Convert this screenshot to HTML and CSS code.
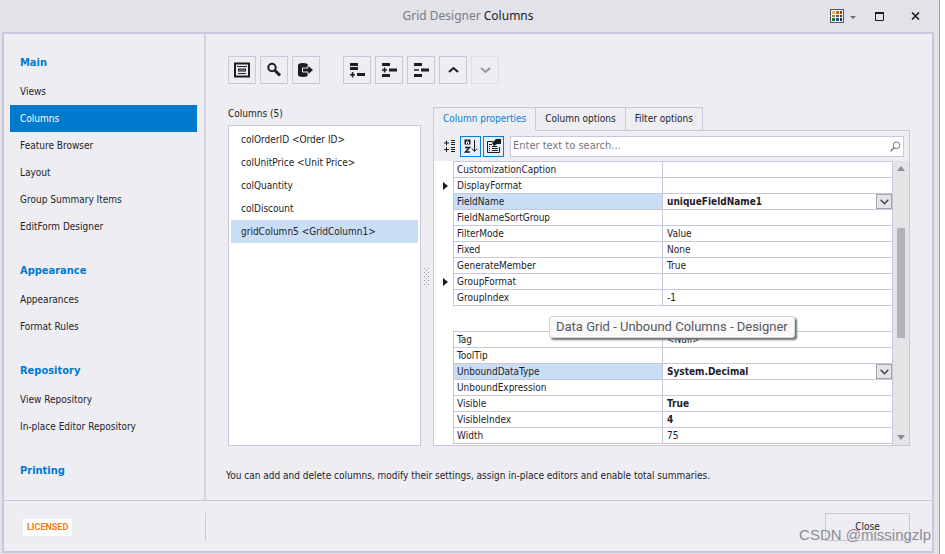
FILE: index.html
```html
<!DOCTYPE html>
<html lang="en">
<head>
<meta charset="utf-8">
<title>Grid Designer Columns</title>
<link rel="stylesheet" href="styles.css">
</head>
<body>
<div class="window">
  <header class="titlebar">
    <h1 class="title"><span class="title-app">Grid Designer</span> Columns</h1>
    <div class="window-buttons">
      <button class="skin-button" type="button" aria-label="Skin">
        <svg width="26" height="14" viewBox="0 0 26 14">
          <rect x=".5" y=".5" width="13" height="13" fill="#f4f4f6" stroke="#55555c"/>
          <rect x="2" y="2" width="3" height="3" fill="#eeb163"/><rect x="6" y="2" width="3" height="3" fill="#c4741c"/><rect x="10" y="2" width="2" height="3" fill="#8c4310"/>
          <rect x="2" y="6" width="3" height="2" fill="#9a8250"/><rect x="6" y="6" width="3" height="2" fill="#17734c"/><rect x="10" y="6" width="2" height="2" fill="#4b2a33"/>
          <rect x="2" y="9" width="3" height="3" fill="#1f7a35"/><rect x="6" y="9" width="3" height="3" fill="#1d55a0"/><rect x="10" y="9" width="2" height="3" fill="#1c2368"/>
          <path d="M20 7h6l-3 3z" fill="#6c6c72"/>
        </svg>
      </button>
      <button type="button" aria-label="Maximize">
        <svg width="9" height="9" viewBox="0 0 9 9"><path d="M.5 1v7.500h8V1" fill="none" stroke="#1b1b1f"/><path d="M0 0h9v2H0z" fill="#1b1b1f"/></svg>
      </button>
      <button type="button" aria-label="Close window">
        <svg width="9" height="8" viewBox="0 0 9 8"><path d="M1 .5l7 7M8 .5l-7 7" stroke="#1b1b1f" stroke-width="1.600"/></svg>
      </button>
    </div>
  </header>

  <div class="frame">
    <div class="body">
      <nav class="sidebar">
        <section>
          <h2>Main</h2>
          <a href="#">Views</a>
          <a href="#" class="current">Columns</a>
          <a href="#">Feature Browser</a>
          <a href="#">Layout</a>
          <a href="#">Group Summary Items</a>
          <a href="#">EditForm Designer</a>
        </section>
        <section>
          <h2>Appearance</h2>
          <a href="#">Appearances</a>
          <a href="#">Format Rules</a>
        </section>
        <section>
          <h2>Repository</h2>
          <a href="#">View Repository</a>
          <a href="#">In-place Editor Repository</a>
        </section>
        <section>
          <h2>Printing</h2>
        </section>
      </nav>

      <main class="content">
        <div class="toolbar">
          <div class="tool-group">
            <button type="button" aria-label="Show list">
              <svg width="16" height="16" viewBox="0 0 16 16"><path d="M1 1.500h14v13H1z" fill="none" stroke="#1d1d1f" stroke-width="2"/><path d="M3 4.500h10M4 11.500h8" stroke="#1d1d1f"/><path d="M4 6.500h8v3H4z" fill="#1d1d1f"/><path d="M5 8h6" stroke="#ededf2" stroke-width=".6"/></svg>
            </button>
            <button type="button" aria-label="Find">
              <svg width="16" height="16" viewBox="0 0 16 16"><circle cx="6" cy="5.500" r="3.700" fill="none" stroke="#1d1d1f" stroke-width="2"/><path d="M9 8.500l5 5" stroke="#1d1d1f" stroke-width="3"/></svg>
            </button>
            <button type="button" aria-label="Retrieve fields">
              <svg width="16" height="16" viewBox="0 0 16 16"><path d="M0 3c0-1.300 2-2 5-2s5 .7 5 2v10c0 1.300-2 2-5 2s-5-.7-5-2z" fill="#1d1d1f"/><path d="M4.500 6H10V3l5.500 5-5.500 5v-3H4.500z" fill="#1d1d1f" stroke="#ededf2"/></svg>
            </button>
          </div>
          <div class="tool-group">
            <button type="button" aria-label="Add column">
              <svg width="16" height="16" viewBox="0 0 16 16"><path d="M1 1h8v3H1zM1 5h8v3H1zM8 11h8v3H8zM1 12h5v1.500H1zM2.800 10h1.500v5.500H2.800z" fill="#1d1d1f"/></svg>
            </button>
            <button type="button" aria-label="Insert column">
              <svg width="16" height="16" viewBox="0 0 16 16"><path d="M1 1h8v3H1zM1 12h8v3H1zM8 6.500h8v3H8zM1 7.300h5v1.500H1zM2.800 5.500h1.500v5H2.800z" fill="#1d1d1f"/></svg>
            </button>
            <button type="button" aria-label="Remove column">
              <svg width="16" height="16" viewBox="0 0 16 16"><path d="M1 1h8v3H1zM1 12h8v3H1zM8 6.500h8v3H8zM1 7.300h5v1.500H1z" fill="#1d1d1f"/></svg>
            </button>
            <button type="button" aria-label="Move up">
              <svg width="16" height="16" viewBox="0 0 16 16"><path d="M4 10l4.500-4L13 10" fill="none" stroke="#1d1d1f" stroke-width="2"/></svg>
            </button>
            <button type="button" aria-label="Move down" disabled>
              <svg width="16" height="16" viewBox="0 0 16 16"><path d="M4 6l4.500 4L13 6" fill="none" stroke="#97979c" stroke-width="2"/></svg>
            </button>
          </div>
        </div>

        <div class="panes">
          <section class="columns-pane">
            <h3>Columns (5)</h3>
            <ul class="column-list">
              <li>colOrderID &lt;Order ID&gt;</li>
              <li>colUnitPrice &lt;Unit Price&gt;</li>
              <li>colQuantity</li>
              <li>colDiscount</li>
              <li class="selected">gridColumn5 &lt;GridColumn1&gt;</li>
            </ul>
          </section>
          <div class="splitter">
            <svg width="6" height="18" viewBox="0 0 6 18"><path d="M0 .5h6M2 2.500h4M0 4.500h6M2 6.500h4M0 8.500h6M2 10.500h4M0 12.500h6M2 14.500h4M0 16.500h6" stroke="#9494a0" stroke-dasharray="1 3"/></svg>
          </div>
          <section class="properties-pane">
            <div class="tabs">
              <button type="button" class="active">Column properties</button>
              <button type="button">Column options</button>
              <button type="button">Filter options</button>
            </div>
            <div class="property-box">
              <div class="property-tools">
                <button type="button" class="plain" aria-label="Categorized">
                  <svg width="14" height="14" viewBox="0 0 14 14"><path d="M1 4h5M3.500 1.500v5M1 10.500h5M3.500 8v5M8 1.500h4M8 3.500h4M8 5.500h4M8 8.500h4M8 10.500h4M8 12.500h4" stroke="#1d1d1f"/></svg>
                </button>
                <button type="button" class="on" aria-label="Alphabetical">
                  <svg width="16" height="16" viewBox="0 0 16 16"><path d="M1.500 1.500h6v5h-6z" fill="#1d1d1f"/><path d="M3.500 6V4h2v2M4 3h1" fill="none" stroke="#fff"/><path d="M2 9.500h4.500L2.500 14H7" fill="none" stroke="#1d1d1f" stroke-width="1.500"/><path d="M11.500 2v11M9 10.500l2.500 3 2.500-3" fill="none" stroke="#1d1d1f"/></svg>
                </button>
                <button type="button" class="on" aria-label="Property pages">
                  <svg width="16" height="16" viewBox="0 0 16 16"><path d="M7 3.500H1.500v11h12V9" fill="none" stroke="#1d1d1f"/><path d="M3 6.500h3M3 8.500h1M6 8.500h5M3 10.500h1M6 10.500h6M3 12.500h1M6 12.500h6" stroke="#1d1d1f"/><path d="M6 5l4-4h4v5h-3L8 8z" fill="#1d1d1f"/><path d="M14 1h1v5h-1z" fill="#1d1d1f"/></svg>
                </button>
                <label class="search">
                  <input type="text" placeholder="Enter text to search..." aria-label="Search properties">
                  <svg width="11" height="11" viewBox="0 0 11 11"><circle cx="6.500" cy="4.300" r="3.300" fill="none" stroke="#77777c"/><path d="M4.200 6.600L.7 10.300" stroke="#77777c" stroke-width="1.500"/></svg>
                </label>
              </div>
              <div class="grid-area">
                <div class="grid">
                  <table>
                    <tr><td></td><th scope="row">CustomizationCaption</th><td></td></tr>
                    <tr><td><i class="expander"></i></td><th scope="row">DisplayFormat</th><td></td></tr>
                    <tr class="marked"><td></td><th scope="row">FieldName</th><td><div class="editor"><b>uniqueFieldName1</b><button type="button" aria-label="Choose field"><svg width="9" height="6" viewBox="0 0 9 6"><path d="M.7 .7l3.800 4L8.300 .7" fill="none" stroke="#3f3f44" stroke-width="1.400"/></svg></button></div></td></tr>
                    <tr><td></td><th scope="row">FieldNameSortGroup</th><td></td></tr>
                    <tr><td></td><th scope="row">FilterMode</th><td>Value</td></tr>
                    <tr><td></td><th scope="row">Fixed</th><td>None</td></tr>
                    <tr><td></td><th scope="row">GenerateMember</th><td>True</td></tr>
                    <tr><td><i class="expander"></i></td><th scope="row">GroupFormat</th><td></td></tr>
                    <tr><td></td><th scope="row">GroupIndex</th><td>-1</td></tr>
                  </table>
                  <table>
                    <tr><td></td><th scope="row">Tag</th><td>&lt;Null&gt;</td></tr>
                    <tr><td></td><th scope="row">ToolTip</th><td></td></tr>
                    <tr class="marked"><td></td><th scope="row">UnboundDataType</th><td><div class="editor"><b>System.Decimal</b><button type="button" aria-label="Choose type"><svg width="9" height="6" viewBox="0 0 9 6"><path d="M.7 .7l3.800 4L8.300 .7" fill="none" stroke="#3f3f44" stroke-width="1.400"/></svg></button></div></td></tr>
                    <tr><td></td><th scope="row">UnboundExpression</th><td></td></tr>
                    <tr><td></td><th scope="row">Visible</th><td><b>True</b></td></tr>
                    <tr><td></td><th scope="row">VisibleIndex</th><td><b>4</b></td></tr>
                    <tr><td></td><th scope="row">Width</th><td>75</td></tr>
                  </table>
                  <div class="tooltip" role="tooltip">Data Grid - Unbound Columns - Designer</div>
                </div>
                <div class="scrollbar">
                  <svg width="8" height="5" viewBox="0 0 8 5"><path d="M0 5l4-5 4 5z" fill="#8e8e92"/></svg>
                  <div class="track"><div class="thumb"></div></div>
                  <svg width="8" height="5" viewBox="0 0 8 5"><path d="M0 0h8L4 5z" fill="#8e8e92"/></svg>
                </div>
              </div>
            </div>
          </section>
        </div>
        <p class="hint">You can add and delete columns, modify their settings, assign in-place editors and enable total summaries.</p>
      </main>
    </div>
    <footer class="footer">
      <div class="license"><span>LICENSED</span></div>
      <button type="button" class="close">Close</button>
    </footer>
  </div>
</div>
<div class="watermark">CSDN @missingzlp</div>
</body>
</html>
```
FILE: styles.css
```css
* { box-sizing: border-box; }

body {
  margin: 0;
  background: #fff;
  color: #1d1d2b;
  font: 10px/14px "DejaVu Sans Condensed", "DejaVu Sans", sans-serif;
}

h1, h2, h3, p, ul { margin: 0; padding: 0; font-size: inherit; }
button { font: inherit; color: inherit; background: none; border: 0; padding: 0; }
svg { display: block; }

.window {
  display: flex;
  flex-direction: column;
  min-height: 100vh;
  margin-right: 5px;
  padding: 0 5px 1px 2px;
  background: #e2e2e9;
  border-right: 1px solid #9c9cbc;
}

/* Title bar */
.titlebar {
  display: grid;
  grid-template-columns: 1fr auto 1fr;
  align-items: center;
  height: 32px;
}
.title {
  grid-column: 2;
  font: 12px/16px "Noto Sans", sans-serif;
  color: #1d1d2b;
}
.title-app { color: #7a7a80; }
.window-buttons {
  display: flex;
  align-items: center;
  justify-content: flex-end;
  gap: 19px;
  padding-right: 14px;
}
.window-buttons button + button + button { margin-left: 8px; }

/* Frame */
.frame {
  flex: 1;
  display: flex;
  flex-direction: column;
  background: #ededf2;
  border: 2px solid #c8c8dc;
}
.body { flex: 1; display: flex; }

.sidebar {
  flex: none;
  width: 202px;
  padding: 14px 7px 8px 6px;
  border-right: 2px solid #d2d2e0;
}
.sidebar section + section { margin-top: 16px; }
.sidebar h2 {
  padding-left: 10px;
  font-size: 11px;
  line-height: 30px;
  color: #0079d0;
}
.sidebar a {
  display: block;
  padding-left: 10px;
  line-height: 27px;
  color: inherit;
  text-decoration: none;
}
.sidebar .current { background: #007acc; color: #fff; }

.content {
  flex: 1;
  min-width: 0;
  display: flex;
  flex-direction: column;
  padding: 22px 22px 16px;
}

.toolbar { display: flex; gap: 23px; }
.tool-group { display: flex; gap: 4px; }
.toolbar button {
  display: grid;
  place-items: center;
  width: 28px;
  height: 28px;
  border: 1px solid #c8c8dc;
}
.toolbar button:disabled { border-color: #dedee8; }

.panes {
  flex: 1;
  display: flex;
  margin-top: 23px;
}

.columns-pane {
  flex: none;
  width: 193px;
  display: flex;
  flex-direction: column;
}
.columns-pane h3 { font-weight: normal; line-height: 14px; margin-bottom: 4px; }
.column-list {
  flex: 1;
  list-style: none;
  padding: 2px;
  background: #fff;
  border: 1px solid #c8c8dc;
}
.column-list li { padding-left: 10px; line-height: 23px; }
.column-list .selected { background: #c9def5; }

.splitter {
  flex: none;
  width: 12px;
  display: grid;
  place-items: center;
}

.properties-pane {
  flex: 1;
  min-width: 0;
  display: flex;
  flex-direction: column;
}
.tabs { display: flex; }
.tabs::after { content: ""; flex: 1; border-bottom: 1px solid #c8c8dc; }
.tabs button {
  height: 24px;
  padding: 0 9px;
  border: 1px solid #c8c8dc;
  border-left: 0;
}
.tabs .active {
  color: #0b7fd6;
  border-left: 1px solid #c8c8dc;
  border-bottom-color: transparent;
}

.property-box {
  flex: 1;
  display: flex;
  flex-direction: column;
  border: 1px solid #c8c8dc;
  border-top: 0;
}
.property-tools {
  display: flex;
  align-items: center;
  gap: 2px;
  height: 30px;
  padding: 0 5px 0 7px;
}
.property-tools button {
  display: grid;
  place-items: center;
  width: 21px;
  height: 21px;
}
.property-tools .plain { width: 17px; }
.property-tools .on { border: 1px solid #0b7fd6; background: #e6eef7; }
.search {
  flex: 1;
  display: flex;
  align-items: center;
  height: 21px;
  margin-left: 4px;
  padding: 0 2px;
  background: #fff;
  border: 1px solid #c8c8dc;
}
.search input {
  flex: 1;
  min-width: 0;
  border: 0;
  padding: 0;
  outline: 0;
  background: none;
  font: inherit;
  font-size: 11px;
  color: inherit;
}
.search input::placeholder { color: #77777c; opacity: 1; }

.grid-area { flex: 1; display: flex; background: #fff; }
.grid { position: relative; flex: 1; min-width: 0; }
.grid table {
  width: 100%;
  table-layout: fixed;
  border-collapse: separate;
  border-spacing: 0;
}
.grid table + table { margin-top: 25px; }
.grid th, .grid td {
  height: 16px;
  padding: 0 0 0 4px;
  border-bottom: 1px solid #c8c8dc;
  border-left: 1px solid #c8c8dc;
  font-weight: normal;
  line-height: 14px;
  text-align: left;
  vertical-align: middle;
}
.grid tr:first-child th, .grid tr:first-child td { height: 17px; border-top: 1px solid #c8c8dc; }
.grid tr td:first-child { width: 19px; padding: 0; border: 0; }
.grid tr:first-child td:first-child { border: 0; }
.grid th { width: 209px; padding-left: 3px; }
.grid .marked th { background: #c9def5; }
.grid b { font-weight: bold; }
.expander {
  display: block;
  width: 0;
  margin-left: 9px;
  border: 4px solid transparent;
  border-left: 5px solid #1d1d1f;
  border-right: 0;
}
.editor { display: flex; height: 15px; align-items: center; }
.editor button {
  display: grid;
  place-items: center;
  width: 16px;
  height: 15px;
  margin-left: auto;
  background: #e4e4e8;
  border: 1px solid #a4a4ac;
}

.tooltip {
  position: absolute;
  left: 115px;
  top: 155px;
  padding: 0 6px;
  border: 1px solid #d8d8d8;
  border-radius: 3px;
  background: #f9f9f9;
  box-shadow: 2px 2px 2px #707070;
  color: #58585c;
  font: 13px/20px Roboto, sans-serif;
  white-space: nowrap;
}

.scrollbar {
  flex: none;
  width: 17px;
  display: flex;
  flex-direction: column;
  align-items: center;
  padding: 5px 0;
  background: #e4e4e6;
  border-left: 1px solid #c8c8dc;
}
.track { flex: 1; width: 8px; display: grid; grid-template-rows: 20fr 39fr 34fr; }
.thumb { grid-row: 2; background: #b4b4b8; }

.hint { margin: 22px 0 0 -2px; line-height: 16px; }

/* Footer */
.footer {
  display: flex;
  justify-content: space-between;
  padding: 12px 22px 10px 0;
  border-top: 1px solid #c8c8dc;
}
.license {
  display: flex;
  align-items: center;
  width: 202px;
  padding-left: 19px;
  border-right: 1px solid #c8c8dc;
}
.license span {
  padding: 0 4px;
  background: #fff;
  color: #f57c14;
  font: bold 9px/17px Roboto, sans-serif;
}
.close { width: 85px; height: 28px; border: 1px solid #c8c8dc; }

.watermark {
  position: absolute;
  right: 14px;
  bottom: 9px;
  color: #8c8c92;
  font: 15px/20px "Liberation Sans", sans-serif;
}
```
